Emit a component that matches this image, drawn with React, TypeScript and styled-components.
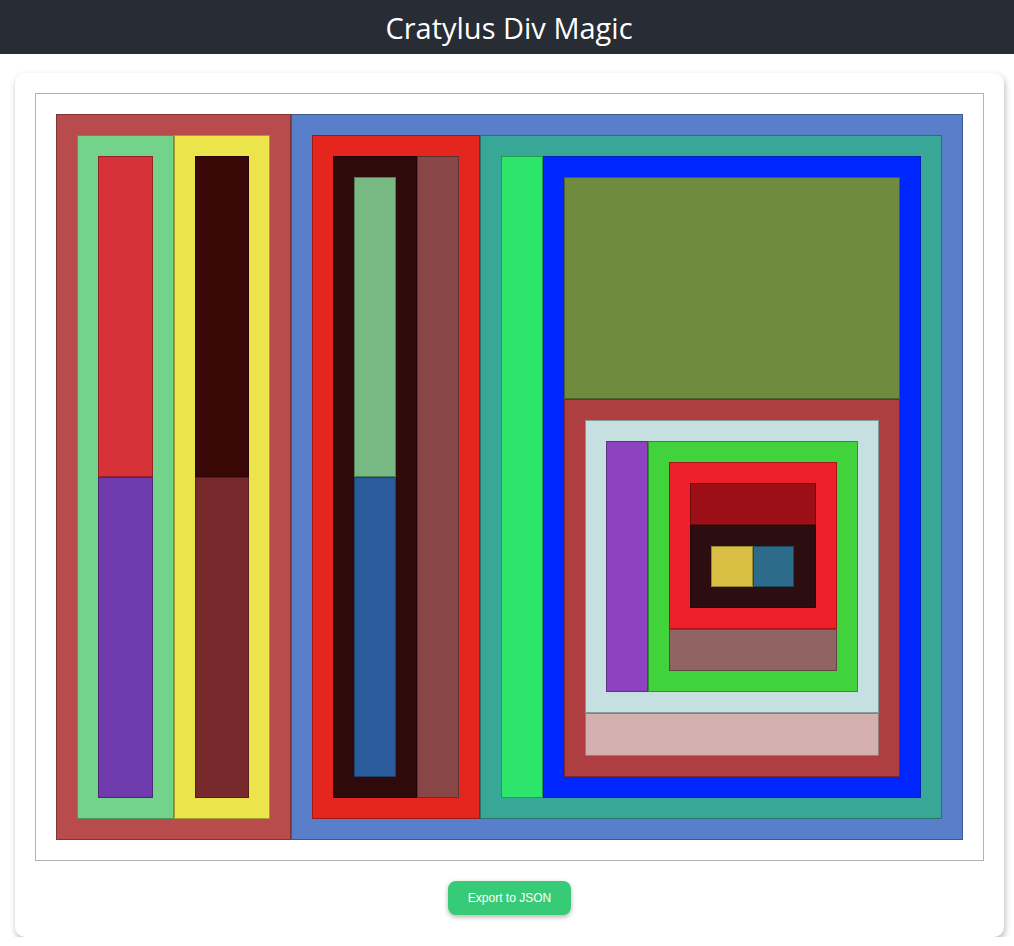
import React from 'react'
import styled, { createGlobalStyle } from 'styled-components'

// size = outer size on the parent's main axis; leave it out to fill the rest
type DivNode = {
    color: string
    size?: number
    dir?: 'row' | 'column'
    children?: DivNode[]
}

const layout: DivNode = {
    color: 'transparent',
    dir: 'row',
    children: [
        {
            color: '#b84c4c', size: 235, dir: 'row', children: [
                {
                    color: '#74d38b', size: 97, dir: 'column', children: [
                        { color: '#d63238', size: 321 },
                        { color: '#6f3aab' },
                    ]
                },
                {
                    color: '#ebe44a', dir: 'column', children: [
                        { color: '#3b0808', size: 321 },
                        { color: '#78292b' },
                    ]
                },
            ]
        },
        {
            color: '#5a7fca', dir: 'row', children: [
                {
                    color: '#e5261e', size: 168, dir: 'row', children: [
                        {
                            color: '#2e0a0a', size: 84, dir: 'column', children: [
                                { color: '#78b882', size: 300 },
                                { color: '#2a5b9b' },
                            ]
                        },
                        { color: '#884646' },
                    ]
                },
                {
                    color: '#38a797', dir: 'row', children: [
                        { color: '#2ce56a', size: 42 },
                        {
                            color: '#0026ff', dir: 'column', children: [
                                { color: '#6f8b3e', size: 222 },
                                {
                                    color: '#ae3e40', dir: 'column', children: [
                                        {
                                            color: '#c6dfe1', size: 293, dir: 'row', children: [
                                                { color: '#8d43c0', size: 42 },
                                                {
                                                    color: '#41d33b', dir: 'column', children: [
                                                        {
                                                            color: '#ee2029', size: 167, dir: 'column', children: [
                                                                { color: '#9c0f17', size: 42 },
                                                                {
                                                                    color: '#2c0e10', dir: 'row', children: [
                                                                        { color: '#d9c045', size: 42 },
                                                                        { color: '#2c6b89', size: 41 },
                                                                    ]
                                                                },
                                                            ]
                                                        },
                                                        { color: '#8f6462' },
                                                    ]
                                                },
                                            ]
                                        },
                                        { color: '#d4b1b0' },
                                    ]
                                },
                            ]
                        },
                    ]
                },
            ]
        },
    ]
}

const GlobalStyle = createGlobalStyle`
    body {
        margin: 0;
        background: #ffffff;
        font-family: "Liberation Sans", Arial, sans-serif;
    }
    * {
        box-sizing: border-box;
    }
`

const Header = styled.header`
    height: 54px;
    background: #282c34;
    display: flex;
    align-items: center;
    justify-content: center;
    padding-left: 4px;
    color: #ffffff;
    font-family: "Open Sans", "Noto Sans", sans-serif;
    font-size: 29px;
`

const Card = styled.main`
    margin: 19px 10px 0 15px;
    padding: 20px 20px 22px;
    background: #ffffff;
    border-radius: 10px;
    box-shadow: 1px 3px 6px rgba(0, 0, 0, 0.28);
    display: flex;
    flex-direction: column;
    align-items: center;
    gap: 20px;
`

const Frame = styled.div`
    width: 100%;
    height: 768px;
    border: 1px solid #b3b3b3;
    padding: 20px;
    display: flex;
`

const Box = styled.div<{ $color: string; $dir: string; $size?: number; $nested: boolean }>`
    display: flex;
    flex-direction: ${({ $dir }) => $dir};
    flex: ${({ $size }) => ($size ? `0 0 ${$size}px` : '1 1 0')};
    min-width: 0;
    min-height: 0;
    background: ${({ $color }) => $color};
    border: ${({ $color }) => ($color === 'transparent' ? 'none' : '1px solid rgba(0, 0, 0, 0.3)')};
    padding: ${({ $nested }) => ($nested ? '20px' : '0')};
`

const ExportButton = styled.button`
    width: 123px;
    height: 34px;
    border: none;
    border-radius: 8px;
    background: #37cb77;
    color: #ffffff;
    font-family: "Liberation Sans", Arial, sans-serif;
    font-size: 12px;
    box-shadow: 0 2px 5px rgba(0, 0, 0, 0.3);
    cursor: pointer;
`

const DivBox: React.FC<{ node: DivNode; root?: boolean }> = ({ node, root }) => (
    <Box
        $color={node.color}
        $dir={node.dir ?? 'row'}
        $size={node.size}
        $nested={!root && !!node.children}
    >
        {node.children?.map((child, i) => <DivBox key={i} node={child} />)}
    </Box>
)

export default function App() {
    return (
        <>
            <GlobalStyle />
            <Header>Cratylus Div Magic</Header>
            <Card>
                <Frame>
                    <DivBox node={layout} root />
                </Frame>
                <ExportButton>Export to JSON</ExportButton>
            </Card>
        </>
    )
}
